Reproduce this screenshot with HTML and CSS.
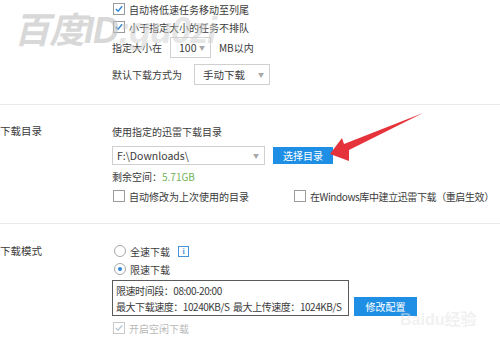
FILE: index.html
```html
<!DOCTYPE html>
<html lang="zh-CN">
<head>
  <meta charset="UTF-8" />
  <title>下载设置</title>
  <link rel="stylesheet" href="styles.css">
</head>
<body>

  <div class="panel">

    <!-- 任务管理 (上半部分被截掉) -->
    <div class="section first">
      <div class="label"></div>
      <div class="body">
        <div class="row">
          <span class="check on"><svg viewBox="0 0 11 11"><path d="M2 5.5 L4.5 8 L9 2.5" /></svg></span>
          <span>自动将低速任务移动至列尾</span>
        </div>
        <div class="row">
          <span class="check on"><svg viewBox="0 0 11 11"><path d="M2 5.5 L4.5 8 L9 2.5" /></svg></span>
          <span>小于指定大小的任务不排队</span>
        </div>
        <div class="row tall">
          <span>指定大小在</span>
          <span class="select small">100<i class="arrow">▼</i></span>
          <span>MB以内</span>
        </div>
        <div class="row tall gap-top">
          <span>默认下载方式为</span>
          <span class="select mode">手动下载<i class="arrow">▼</i></span>
        </div>
      </div>
    </div>

    <!-- 下载目录 -->
    <div class="section dir">
      <div class="label">下载目录</div>
      <div class="body">
        <div class="row">使用指定的迅雷下载目录</div>
        <div class="row tall">
          <span class="select path">F:\Downloads\<i class="arrow">▼</i></span>
          <button class="btn">选择目录</button>
        </div>
        <div class="row">剩余空间：<span class="free">5.71GB</span></div>
        <div class="row split">
          <span class="opt first-opt"><span class="check"></span>自动修改为上次使用的目录</span>
          <span class="opt tight"><span class="check"></span>在Windows库中建立迅雷下载（重启生效）</span>
        </div>
      </div>
    </div>

    <!-- 下载模式 -->
    <div class="section mode-sec">
      <div class="label">下载模式</div>
      <div class="body">
        <div class="row">
          <span class="radio"></span>
          <span>全速下载</span>
          <span class="info">i</span>
        </div>
        <div class="row">
          <span class="radio on"></span>
          <span>限速下载</span>
        </div>
        <div class="limit-row">
          <div class="limit-box">
            <div>限速时间段：08:00-20:00</div>
            <div>最大下载速度：10240KB/S&nbsp;&nbsp;最大上传速度：1024KB/S</div>
          </div>
          <button class="btn">修改配置</button>
        </div>
        <div class="row disabled">
          <span class="check on"><svg viewBox="0 0 11 11"><path d="M2 5.5 L4.5 8 L9 2.5" /></svg></span>
          <span>开启空闲下载</span>
        </div>
      </div>
    </div>

  </div>

  <!-- watermarks and annotation arrow -->
  <div class="watermark">百度ID<span class="faint">:gu0zi</span></div>
  <div class="watermark-bd">Baidu经验</div>
  <svg class="arrow-mark" width="500" height="354" viewBox="0 0 500 354">
    <polygon points="330,154 342,138 344,144 423,113 349,150 349,161" fill="#e5323b" />
  </svg>

</body>
</html>
```

FILE: styles.css
```css
body {
  margin: 0;
  background: #fff;
  font-family: "Noto Sans CJK SC", "Liberation Sans", sans-serif;
  font-size: 10px;
  color: #3a3a3a;
  width: 500px;
  height: 354px;
  overflow: hidden;
  position: relative;
}

.section {
  display: flex;
  border-bottom: 1px solid #ebebeb;
}

.section.first {
  height: 104px;
}

.section.dir {
  height: 119px;
  padding-top: 17px;
  box-sizing: border-box;
}

.section.mode-sec {
  border-bottom: none;
  padding-top: 18px;
}

.label {
  width: 112px;
  flex-shrink: 0;
  font-size: 10.5px;
  line-height: 18px;
}

.body {
  display: flex;
  flex-direction: column;
}

.row {
  display: flex;
  align-items: center;
  height: 18px;
  gap: 4px;
}

.row.tall {
  height: 22px;
  gap: 8px;
}

.row.gap-top {
  margin-top: 5px;
  gap: 12px;
}

.section.dir .row.tall {
  margin: 4px 0 1px;
}

.check {
  width: 10px;
  height: 10px;
  border: 1px solid #9a9a9a;
  background: #fff;
  margin-left: 1px;
  display: inline-flex;
}

.check svg {
  width: 10px;
  height: 10px;
}

.check svg path {
  fill: none;
  stroke: #2d86d6;
  stroke-width: 1.5;
}

.select {
  height: 19px;
  border: 1px solid #d0d0d0;
  display: inline-flex;
  align-items: center;
  justify-content: space-between;
  padding: 0 5px 0 8px;
  box-sizing: border-box;
  font-size: 10.5px;
}

.select.small {
  width: 41px;
  height: 21px;
}

.select.mode {
  width: 76px;
  height: 21px;
}

.select.path {
  width: 153px;
  padding-left: 4px;
}

.arrow {
  font-style: normal;
  font-size: 6px;
  color: #a8a8a8;
}

.btn {
  height: 17px;
  padding: 0 13px;
  border: none;
  background: #1f8fe5;
  color: #fff;
  font-family: inherit;
  font-size: 10px;
  line-height: 17px;
}

.section.dir .btn {
  width: 60px;
  padding: 0;
}

.free {
  color: #6fb25a;
  margin-left: -4px;
}

.row.split {
  margin-top: 2px;
  gap: 0;
}

.opt {
  display: flex;
  align-items: center;
  gap: 4px;
}

.first-opt {
  width: 181px;
}

.tight {
  letter-spacing: -0.4px;
}

.radio {
  width: 10px;
  height: 10px;
  border: 1px solid #a8a8a8;
  border-radius: 50%;
  margin-left: 2px;
  display: inline-flex;
  align-items: center;
  justify-content: center;
}

.radio.on::after {
  content: "";
  width: 4px;
  height: 4px;
  border-radius: 50%;
  background: #2d86d6;
}

.info {
  width: 9px;
  height: 9px;
  border: 1px solid #4a92d8;
  color: #4a92d8;
  font-family: "Liberation Serif", serif;
  font-weight: bold;
  font-size: 8px;
  line-height: 9px;
  text-align: center;
  margin-left: 4px;
}

.limit-row {
  display: flex;
  align-items: flex-end;
  gap: 5px;
  margin-top: 2px;
}

.limit-box {
  width: 237px;
  height: 36px;
  border: 1px solid #5a5a5a;
  padding: 1px 0 0 3px;
  box-sizing: border-box;
  display: flex;
  flex-direction: column;
  justify-content: space-around;
  line-height: 15px;
  white-space: nowrap;
  letter-spacing: -0.45px;
}

.limit-row .btn {
  height: 19px;
  width: 63px;
  padding: 0;
}

.row.disabled {
  color: #b9b9b9;
  margin-top: 3px;
}

.row.disabled .check {
  border-color: #c8c8c8;
}

.row.disabled .check svg path {
  stroke: #b9c9d8;
}

.watermark {
  position: absolute;
  left: 14px;
  top: 1px;
  font-family: "Liberation Sans", "Noto Sans CJK SC", sans-serif;
  font-size: 36px;
  font-weight: bold;
  font-style: italic;
  color: rgba(190, 190, 190, 0.6);
  letter-spacing: -1px;
  pointer-events: none;
}

.watermark .faint {
  color: rgba(205, 205, 205, 0.5);
}

.watermark-bd {
  position: absolute;
  left: 400px;
  top: 306px;
  font-family: "Liberation Sans", "Noto Sans CJK SC", sans-serif;
  font-size: 16px;
  font-weight: bold;
  color: rgba(228, 228, 228, 0.5);
}

.arrow-mark {
  position: absolute;
  left: 0;
  top: 0;
  pointer-events: none;
}
```
